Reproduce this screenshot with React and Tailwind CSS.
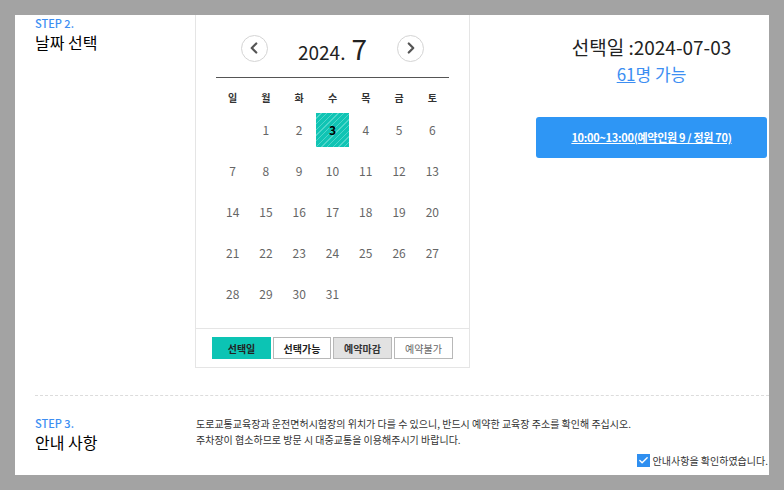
import { Check, ChevronLeft, ChevronRight } from "lucide-react";

const font = "font-['Noto_Sans_CJK_KR','Noto_Sans',sans-serif]";

const weekDays = ["일", "월", "화", "수", "목", "금", "토"];
// July 2024 starts on Monday
const dates = [null, ...Array.from({ length: 31 }, (_, i) => i + 1)];
const selectedDate = 3;

function NavButton({ children }) {
    return (
        <button className="w-[27px] h-[27px] rounded-full border border-[#d4d4d4] bg-white flex items-center justify-center text-[#555]">
            {children}
        </button>
    );
}

function Legend() {
    return (
        <div className="border-t border-[#e5e5e5] flex justify-center gap-[2px] pt-[8px] pb-[8px]">
            <div className="w-[59px] h-[22px] bg-[#0cc4b4] flex items-center justify-center text-[10px] font-bold text-[#222]">
                선택일
            </div>
            <div className="w-[58px] h-[22px] border border-[#b8b8b8] bg-white flex items-center justify-center text-[10px] font-bold text-[#222]">
                선택가능
            </div>
            <div className="w-[59px] h-[22px] border border-[#b8b8b8] bg-[#e2e2e2] flex items-center justify-center text-[10px] font-bold text-[#333]">
                예약마감
            </div>
            <div className="w-[59px] h-[22px] border border-[#b8b8b8] bg-white flex items-center justify-center text-[10px] text-[#666]">
                예약불가
            </div>
        </div>
    );
}

function Calendar() {
    return (
        <div className="w-[275px] border-x border-b border-[#e5e5e5] bg-white">
            <div className="px-[20px] pt-[19px]">
                <div className="flex items-center justify-center gap-[30px]">
                    <NavButton>
                        <ChevronLeft className="w-[18px] h-[18px]" strokeWidth={3} />
                    </NavButton>
                    <div className="flex items-baseline text-[#222] leading-none">
                        <span className="text-[19px]">2024.</span>
                        <span className="text-[28px] ml-[6px]">7</span>
                    </div>
                    <NavButton>
                        <ChevronRight className="w-[18px] h-[18px]" strokeWidth={3} />
                    </NavButton>
                </div>
                <div className="h-px bg-[#555] mt-[15px]" />
                <div className="grid grid-cols-7 mt-[9px] h-[20px] items-center">
                    {weekDays.map((d) => (
                        <div key={d} className="text-center text-[10px] font-bold text-[#333]">
                            {d}
                        </div>
                    ))}
                </div>
                <div className="grid grid-cols-7 gap-y-[7px] mt-[6px] mb-[17px]">
                    {dates.map((d, i) =>
                        d === selectedDate ? (
                            <div
                                key={i}
                                className="h-[34px] flex items-center justify-center text-[12px] font-bold text-black bg-[repeating-linear-gradient(-45deg,#10c4b4_0px,#10c4b4_3px,#4fd6ca_3px,#4fd6ca_4px)]"
                            >
                                {d}
                            </div>
                        ) : (
                            <div key={i} className="h-[34px] flex items-center justify-center text-[12px] text-[#666]">
                                {d}
                            </div>
                        )
                    )}
                </div>
            </div>
            <Legend />
        </div>
    );
}

export default function App() {
    return (
        <div className={`${font} bg-[#a3a3a3] h-[490px] pt-[15px] pl-[15px] overflow-hidden`}>
            <div className="w-[754px] h-[460px] bg-white">
                <div className="flex">
                    <div className="w-[180px] pl-[20px] pt-[1px]">
                        <p className="text-[11px] font-medium text-[#3c8ef2] leading-[14px]">STEP 2.</p>
                        <h2 className="text-[16px] text-black leading-[22px] mt-[1px]">날짜 선택</h2>
                    </div>
                    <Calendar />
                    <div className="flex-1 pl-[66px] pr-[2px]">
                        <div className="w-[231px] text-center pt-[19px]">
                            <p className="text-[19px] text-[#222] leading-[26px]">선택일 :2024-07-03</p>
                            <p className="text-[17px] text-[#3c8ef2] leading-[24px] mt-[2px]">
                                <span className="underline">61</span>명 가능
                            </p>
                        </div>
                        <button className="mt-[31px] w-[231px] h-[41px] rounded-[3px] bg-[#2e96f5] text-white text-[11px] font-bold underline tracking-[-0.3px]">
                            10:00~13:00(예약인원 9 / 정원 70)
                        </button>
                    </div>
                </div>

                <div className="ml-[20px] mt-[27px] border-t border-dashed border-[#dcdcdc] w-[734px]" />

                <div className="flex mt-[20px]">
                    <div className="w-[181px] pl-[20px]">
                        <p className="text-[11px] font-medium text-[#3c8ef2] leading-[14px]">STEP 3.</p>
                        <h2 className="text-[16px] text-black leading-[22px] mt-[1px]">안내 사항</h2>
                    </div>
                    <div className="flex-1 pr-[1px]">
                        <p className="text-[10px] text-[#333] leading-[16px]">
                            도로교통교육장과 운전면허시험장의 위치가 다를 수 있으니, 반드시 예약한 교육장 주소를 확인해 주십시오.
                        </p>
                        <p className="text-[10px] text-[#333] leading-[16px]">
                            주차장이 협소하므로 방문 시 대중교통을 이용해주시기 바랍니다.
                        </p>
                        <label className="flex items-center justify-end gap-[3px] mt-[5px]">
                            <span className="w-[13px] h-[13px] bg-[#2f8ff0] flex items-center justify-center">
                                <Check className="w-[11px] h-[11px] text-white" strokeWidth={3} />
                            </span>
                            <span className="text-[10px] text-[#333]">안내사항을 확인하였습니다.</span>
                        </label>
                    </div>
                </div>
            </div>
        </div>
    );
}
